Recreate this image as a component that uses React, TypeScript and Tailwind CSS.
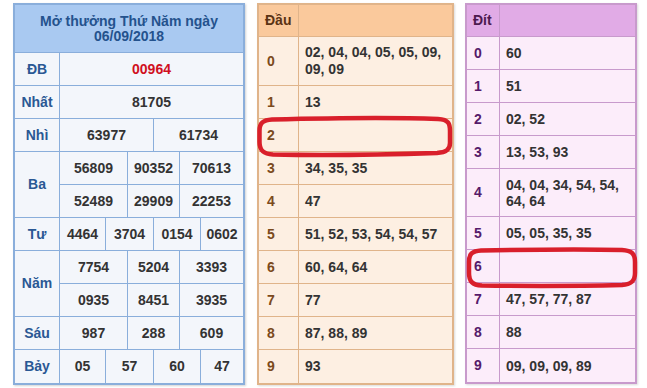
import React from "react";

const BL = "border-[#8aaedb]";

function LCell({ children, last, red }: { children?: React.ReactNode; last?: boolean; red?: boolean }) {
  return (
    <div className={`flex items-center justify-center ${last ? "" : "border-r " + BL} ${red ? "text-[#d0101e]" : ""}`}>
      {children}
    </div>
  );
}

function LabelCell({ children }: { children: React.ReactNode }) {
  return (
    <div className={`w-[45px] shrink-0 flex items-center justify-center border-r ${BL} text-[#2a5894]`}>{children}</div>
  );
}

function ValRow({ cols, values, border, h }: { cols: string; values: string[]; border?: boolean; h: string }) {
  return (
    <div className={`grid ${cols} ${h} ${border ? "border-b " + BL : ""}`}>
      {values.map((v, i) => (
        <LCell key={i} last={i === values.length - 1}>
          {v}
        </LCell>
      ))}
    </div>
  );
}

const C2 = "grid-cols-[94px_89px]";
const C3 = "grid-cols-[68px_52px_63px]";
const C4 = "grid-cols-[46px_48px_47px_42px]";

function LeftTable() {
  return (
    <div className={`w-[232px] border-2 ${BL} bg-[#f3f6fb] shadow-[1px_1px_2px_rgba(0,0,0,0.18)]`}>
      <div className={`h-[48px] bg-[#a9c9f1] border-b ${BL} flex flex-col items-center justify-center text-[#24528d] leading-[15px] text-[14px]`}>
        <div>Mở thưởng Thứ Năm ngày</div>
        <div>06/09/2018</div>
      </div>
      <div className={`flex h-[33px] border-b ${BL}`}>
        <LabelCell>ĐB</LabelCell>
        <div className="flex-1 flex items-center justify-center text-[#d0101e]">00964</div>
      </div>
      <div className={`flex h-[33px] border-b ${BL}`}>
        <LabelCell>Nhất</LabelCell>
        <div className="flex-1 flex items-center justify-center">81705</div>
      </div>
      <div className={`flex h-[33px] border-b ${BL}`}>
        <LabelCell>Nhì</LabelCell>
        <div className="flex-1">
          <ValRow cols={C2} h="h-full" values={["63977", "61734"]} />
        </div>
      </div>
      <div className={`flex h-[66px] border-b ${BL}`}>
        <LabelCell>Ba</LabelCell>
        <div className="flex-1 flex flex-col">
          <ValRow cols={C3} h="h-[33px]" border values={["56809", "90352", "70613"]} />
          <ValRow cols={C3} h="h-[32px]" values={["52489", "29909", "22253"]} />
        </div>
      </div>
      <div className={`flex h-[33px] border-b ${BL}`}>
        <LabelCell>Tư</LabelCell>
        <div className="flex-1">
          <ValRow cols={C4} h="h-full" values={["4464", "3704", "0154", "0602"]} />
        </div>
      </div>
      <div className={`flex h-[66px] border-b ${BL}`}>
        <LabelCell>Năm</LabelCell>
        <div className="flex-1 flex flex-col">
          <ValRow cols={C3} h="h-[33px]" border values={["7754", "5204", "3393"]} />
          <ValRow cols={C3} h="h-[32px]" values={["0935", "8451", "3935"]} />
        </div>
      </div>
      <div className={`flex h-[33px] border-b ${BL}`}>
        <LabelCell>Sáu</LabelCell>
        <div className="flex-1">
          <ValRow cols={C3} h="h-full" values={["987", "288", "609"]} />
        </div>
      </div>
      <div className="flex h-[33px]">
        <LabelCell>Bảy</LabelCell>
        <div className="flex-1">
          <ValRow cols={C4} h="h-full" values={["05", "57", "60", "47"]} />
        </div>
      </div>
    </div>
  );
}

const midRows: [string, string, string][] = [
  ["0", "02, 04, 04, 05, 05, 09, 09, 09", "h-[49px]"],
  ["1", "13", "h-[33px]"],
  ["2", "", "h-[33px]"],
  ["3", "34, 35, 35", "h-[33px]"],
  ["4", "47", "h-[33px]"],
  ["5", "51, 52, 53, 54, 54, 57", "h-[33px]"],
  ["6", "60, 64, 64", "h-[33px]"],
  ["7", "77", "h-[33px]"],
  ["8", "87, 88, 89", "h-[33px]"],
  ["9", "93", "h-[33px]"],
];

function MidTable() {
  const B = "border-[#e0b48a]";
  return (
    <div className={`w-[197px] border-2 ${B} bg-[#fdefe2] shadow-[1px_1px_2px_rgba(0,0,0,0.15)]`}>
      <div className={`flex h-[32px] bg-[#fac99c] border-b ${B}`}>
        <div className={`w-[40px] shrink-0 border-r ${B} flex items-center pl-[6px] text-[#5a3314]`}>Đầu</div>
        <div className="flex-1" />
      </div>
      {midRows.map(([k, v, h], i) => (
        <div key={k} className={`flex ${h} ${i === midRows.length - 1 ? "" : "border-b " + B}`}>
          <div className={`w-[40px] shrink-0 border-r ${B} flex items-center pl-[8px] text-[#7b4a1c]`}>{k}</div>
          <div className="flex-1 flex items-center pl-[6px] pr-[4px] leading-[17px]">{v}</div>
        </div>
      ))}
    </div>
  );
}

const rightRows: [string, string, string][] = [
  ["0", "60", "h-[33px]"],
  ["1", "51", "h-[33px]"],
  ["2", "02, 52", "h-[33px]"],
  ["3", "13, 53, 93", "h-[33px]"],
  ["4", "04, 04, 34, 54, 54, 64, 64", "h-[48px]"],
  ["5", "05, 05, 35, 35", "h-[33px]"],
  ["6", "", "h-[33px]"],
  ["7", "47, 57, 77, 87", "h-[33px]"],
  ["8", "88", "h-[33px]"],
  ["9", "09, 09, 09, 89", "h-[33px]"],
];

function RightTable() {
  const B = "border-[#c89acc]";
  return (
    <div className={`w-[172px] border-2 ${B} bg-[#fcedfa] shadow-[1px_1px_2px_rgba(0,0,0,0.15)]`}>
      <div className={`flex h-[32px] bg-[#e1abe6] border-b ${B}`}>
        <div className={`w-[33px] shrink-0 border-r ${B} flex items-center pl-[6px] text-[#4d1a4f]`}>Đít</div>
        <div className="flex-1" />
      </div>
      {rightRows.map(([k, v, h], i) => (
        <div key={k} className={`flex ${h} ${i === rightRows.length - 1 ? "" : "border-b " + B}`}>
          <div className={`w-[33px] shrink-0 border-r ${B} flex items-center pl-[7px] text-[#561a6a]`}>{k}</div>
          <div className="flex-1 flex items-center pl-[6px] pr-[4px] leading-[16px]">{v}</div>
        </div>
      ))}
    </div>
  );
}

export default function App() {
  return (
    <div className="relative w-[647px] h-[388px] bg-white font-['Liberation_Sans',Arial,sans-serif] font-bold text-[14px] text-[#333]">
      <div className="flex items-start pt-[3px] pl-[13px]">
        <LeftTable />
        <div className="ml-[12px]">
          <MidTable />
        </div>
        <div className="ml-[11px]">
          <RightTable />
        </div>
      </div>
      <svg className="absolute left-0 top-0 pointer-events-none" width="647" height="388" viewBox="0 0 647 388">
        <path
          d="M272 119.5 C330 118 400 117.5 438 119 C449 119.5 450 124 450 131 L450 143 C450 150 446 152.5 437 153 C390 154.5 320 155.5 273 154.5 C263 154 259.5 150 259.5 142 L259.5 131 C259.5 123 263 120 272 119.5 Z"
          fill="none"
          stroke="#d91f2b"
          strokeWidth="4.5"
        />
        <path
          d="M481 250.5 C530 249.5 590 249 622 250 C632 250.5 635 254 635 262 L635 273 C635 281 631 284.5 622 285 C580 286 520 286 482 285.5 C472 285 469 281 469 273 L469 262 C469 254 472 251 481 250.5 Z"
          fill="none"
          stroke="#d91f2b"
          strokeWidth="4.5"
        />
      </svg>
    </div>
  );
}
